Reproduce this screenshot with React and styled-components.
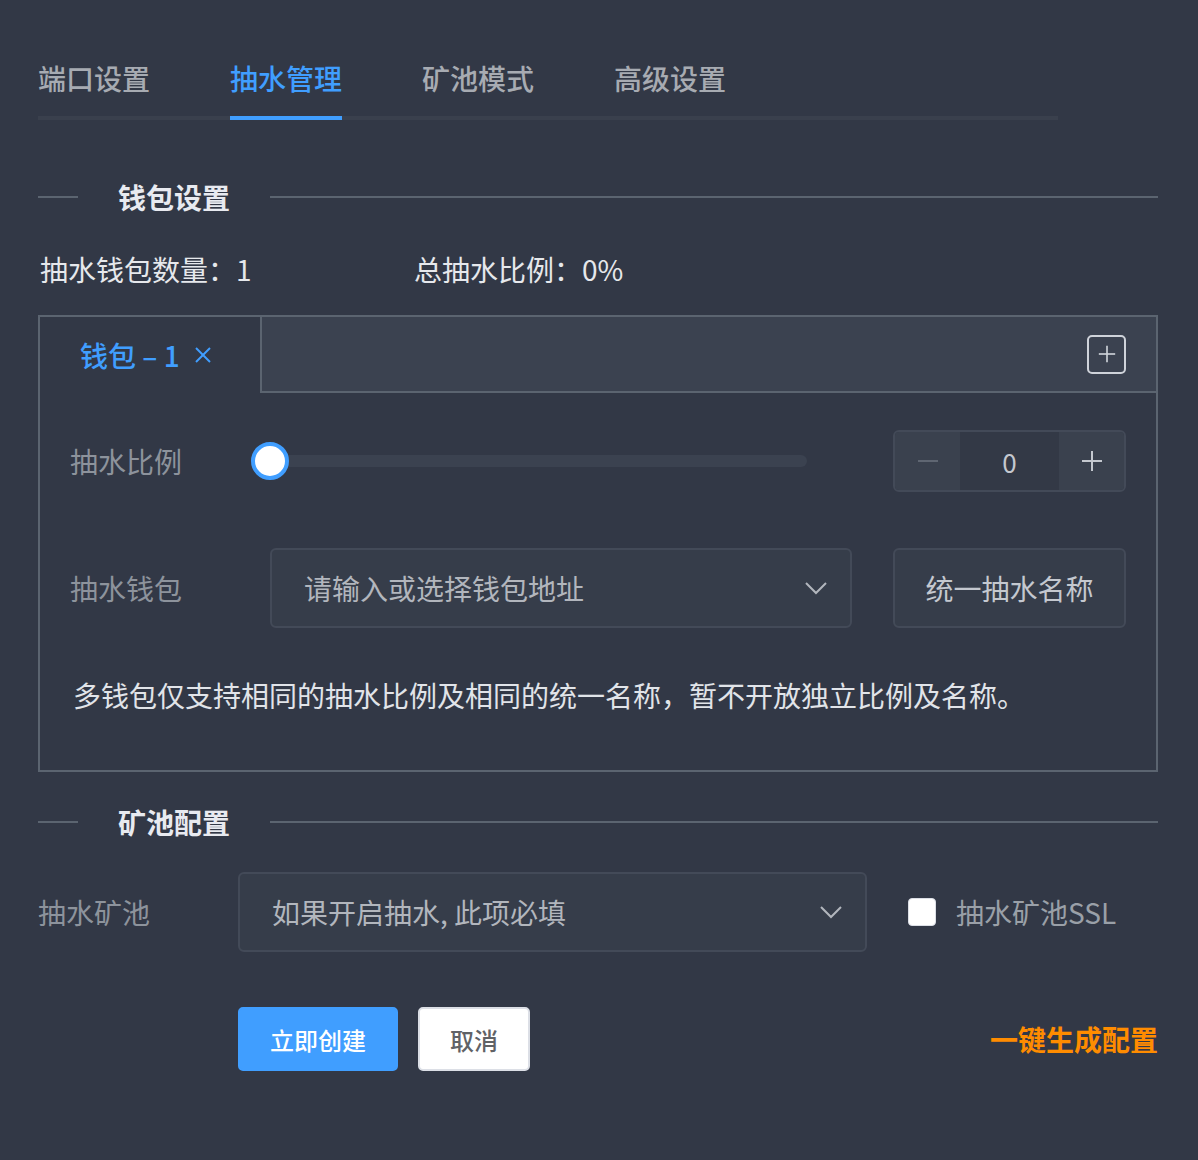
import styled, { createGlobalStyle } from 'styled-components';

const GlobalStyle = createGlobalStyle`
  html, body {
    margin: 0;
    padding: 0;
    background: #323846;
  }
  body {
    font-family: "Noto Sans CJK SC", "Noto Sans", sans-serif;
  }
  * { box-sizing: border-box; }
`;

const Page = styled.div`
  width: 1198px;
  min-height: 1160px;
  padding: 40px 40px 90px 38px;
  background: #323846;
`;

const TabNav = styled.div`
  display: flex;
  gap: 80px;
  width: 1020px;
  border-bottom: 4px solid #3a404d;
`;

const TabItem = styled.div`
  position: relative;
  height: 76px;
  line-height: 76px;
  font-size: 28px;
  font-weight: 500;
  color: ${({ $active }) => ($active ? '#409eff' : '#a7abb2')};
  &::after {
    content: '';
    position: absolute;
    left: 0;
    right: 0;
    bottom: -4px;
    height: 4px;
    background: ${({ $active }) => ($active ? '#409eff' : 'transparent')};
  }
`;

const Divider = styled.div`
  display: flex;
  align-items: center;
  height: 40px;
  margin-top: ${({ $top }) => $top}px;
  &::before {
    content: '';
    width: 40px;
    height: 2px;
    background: #5b6470;
  }
  &::after {
    content: '';
    flex: 1;
    height: 2px;
    background: #5b6470;
  }
`;

const DividerText = styled.span`
  padding: 0 40px;
  font-size: 28px;
  font-weight: 700;
  color: #e8eaf0;
`;

const Stats = styled.div`
  display: flex;
  height: 40px;
  margin-top: 32px;
  padding-left: 2px;
  align-items: center;
  font-size: 28px;
  line-height: 36px;
  color: #e6e8ec;
`;

const Stat = styled.span`
  width: ${({ $w }) => $w || 'auto'};
`;

const Card = styled.div`
  margin-top: 26px;
  border: 2px solid #5b6470;
`;

const CardHeader = styled.div`
  display: flex;
  height: 76px;
  background: #3b4250;
`;

const WalletTab = styled.div`
  display: flex;
  align-items: center;
  gap: 14px;
  width: 222px;
  padding-left: 40px;
  background: #323846;
  border-right: 2px solid #5b6470;
  font-size: 28px;
  font-weight: 500;
  color: #409eff;
`;

const HeaderFill = styled.div`
  flex: 1;
  display: flex;
  align-items: center;
  justify-content: flex-end;
  padding-right: 30px;
  border-bottom: 2px solid #5b6470;
`;

const AddButton = styled.div`
  width: 39px;
  height: 39px;
  border: 2px solid #cfd3da;
  border-radius: 5px;
  display: flex;
  align-items: center;
  justify-content: center;
`;

const CardBody = styled.div`
  padding: 37px 30px 55px 30px;
`;

const FormRow = styled.div`
  display: flex;
  align-items: center;
  margin-top: ${({ $top }) => $top || 0}px;
`;

const Label = styled.div`
  width: 200px;
  flex: none;
  font-size: 28px;
  color: #8d939c;
`;

const SliderWrap = styled.div`
  flex: 1;
  position: relative;
  height: 62px;
  display: flex;
  align-items: center;
  margin-right: 86px;
`;

const SliderTrack = styled.div`
  width: 100%;
  height: 12px;
  border-radius: 6px;
  background: #3b4250;
`;

const SliderThumb = styled.div`
  position: absolute;
  left: -19px;
  top: 50%;
  width: 38px;
  height: 38px;
  margin-top: -19px;
  border-radius: 50%;
  background: #fff;
  border: 4px solid #409eff;
`;

const NumberInput = styled.div`
  width: 233px;
  height: 62px;
  flex: none;
  display: flex;
  border: 2px solid #434a58;
  border-radius: 6px;
  overflow: hidden;
`;

const NumBtn = styled.div`
  width: 65px;
  display: flex;
  align-items: center;
  justify-content: center;
  background: #3a414e;
`;

const NumValue = styled.div`
  flex: 1;
  display: flex;
  align-items: center;
  justify-content: center;
  background: #333946;
  font-size: 26px;
  color: #c4c8cf;
`;

const Select = styled.div`
  flex: ${({ $w }) => ($w ? 'none' : 1)};
  width: ${({ $w }) => ($w ? `${$w}px` : 'auto')};
  height: 80px;
  margin-right: 41px;
  display: flex;
  align-items: center;
  justify-content: space-between;
  padding: 0 22px 0 32px;
  background: #363d4a;
  border: 2px solid #434a58;
  border-radius: 6px;
  font-size: 28px;
  color: #b2b6bd;
`;

const GhostButton = styled.div`
  width: 233px;
  height: 80px;
  flex: none;
  display: flex;
  align-items: center;
  justify-content: center;
  background: #363d4a;
  border: 2px solid #434a58;
  border-radius: 6px;
  font-size: 28px;
  color: #c4c8cf;
`;

const Note = styled.p`
  margin: 47px 0 0 3px;
  line-height: 40px;
  font-size: 28px;
  color: #e1e4e9;
`;

const CheckLabel = styled.label`
  display: flex;
  align-items: center;
  gap: 20px;
  font-size: 28px;
  color: #9aa0a8;
`;

const CheckBox = styled.span`
  width: 28px;
  height: 28px;
  border-radius: 4px;
  background: #fff;
  border: 1px solid #dcdfe6;
`;

const Actions = styled.div`
  display: flex;
  align-items: center;
  margin-top: 55px;
  padding-left: 200px;
  gap: 20px;
`;

const Button = styled.button`
  height: 64px;
  padding: 0 30px;
  border-radius: 5px;
  font-family: inherit;
  font-size: 24px;
  font-weight: 500;
  border: 2px solid ${({ $primary }) => ($primary ? '#409eff' : '#dcdfe6')};
  background: ${({ $primary }) => ($primary ? '#409eff' : '#ffffff')};
  color: ${({ $primary }) => ($primary ? '#ffffff' : '#606266')};
`;

const OneKey = styled.span`
  margin-left: auto;
  font-size: 28px;
  font-weight: 700;
  color: #ff8c00;
`;

const Chevron = () => (
  <svg width="24" height="14" viewBox="0 0 24 14" fill="none">
    <polyline points="2,2 12,12 22,2" stroke="#b2b6bd" strokeWidth="2" />
  </svg>
);

const PlusIcon = ({ color, size = 22 }) => (
  <svg width={size} height={size} viewBox="0 0 22 22">
    <line x1="11" y1="1" x2="11" y2="21" stroke={color} strokeWidth="2" />
    <line x1="1" y1="11" x2="21" y2="11" stroke={color} strokeWidth="2" />
  </svg>
);

const MinusIcon = () => (
  <svg width="22" height="22" viewBox="0 0 22 22">
    <line x1="1" y1="11" x2="21" y2="11" stroke="#5f6672" strokeWidth="2" />
  </svg>
);

const CloseIcon = () => (
  <svg width="18" height="18" viewBox="0 0 18 18">
    <line x1="2" y1="2" x2="16" y2="16" stroke="#409eff" strokeWidth="2" />
    <line x1="16" y1="2" x2="2" y2="16" stroke="#409eff" strokeWidth="2" />
  </svg>
);

const tabs = ['端口设置', '抽水管理', '矿池模式', '高级设置'];

export default function App() {
  return (
    <Page>
      <GlobalStyle />
      <TabNav>
        {tabs.map((t) => (
          <TabItem key={t} $active={t === '抽水管理'}>{t}</TabItem>
        ))}
      </TabNav>

      <Divider $top={57}>
        <DividerText>钱包设置</DividerText>
      </Divider>

      <Stats>
        <Stat $w="374px">抽水钱包数量：1</Stat>
        <Stat>总抽水比例：0%</Stat>
      </Stats>

      <Card>
        <CardHeader>
          <WalletTab>
            <span>钱包 – 1</span>
            <CloseIcon />
          </WalletTab>
          <HeaderFill>
            <AddButton>
              <PlusIcon color="#cfd3da" size={18} />
            </AddButton>
          </HeaderFill>
        </CardHeader>
        <CardBody>
          <FormRow>
            <Label>抽水比例</Label>
            <SliderWrap>
              <SliderTrack />
              <SliderThumb />
            </SliderWrap>
            <NumberInput>
              <NumBtn><MinusIcon /></NumBtn>
              <NumValue>0</NumValue>
              <NumBtn><PlusIcon color="#c4c8cf" /></NumBtn>
            </NumberInput>
          </FormRow>
          <FormRow $top={56}>
            <Label>抽水钱包</Label>
            <Select>
              <span>请输入或选择钱包地址</span>
              <Chevron />
            </Select>
            <GhostButton>统一抽水名称</GhostButton>
          </FormRow>
          <Note>多钱包仅支持相同的抽水比例及相同的统一名称，暂不开放独立比例及名称。</Note>
        </CardBody>
      </Card>

      <Divider $top={30}>
        <DividerText>矿池配置</DividerText>
      </Divider>

      <FormRow $top={30}>
        <Label>抽水矿池</Label>
        <Select $w={629}>
          <span>如果开启抽水, 此项必填</span>
          <Chevron />
        </Select>
        <CheckLabel>
          <CheckBox />
          抽水矿池SSL
        </CheckLabel>
      </FormRow>

      <Actions>
        <Button $primary>立即创建</Button>
        <Button>取消</Button>
        <OneKey>一键生成配置</OneKey>
      </Actions>
    </Page>
  );
}
